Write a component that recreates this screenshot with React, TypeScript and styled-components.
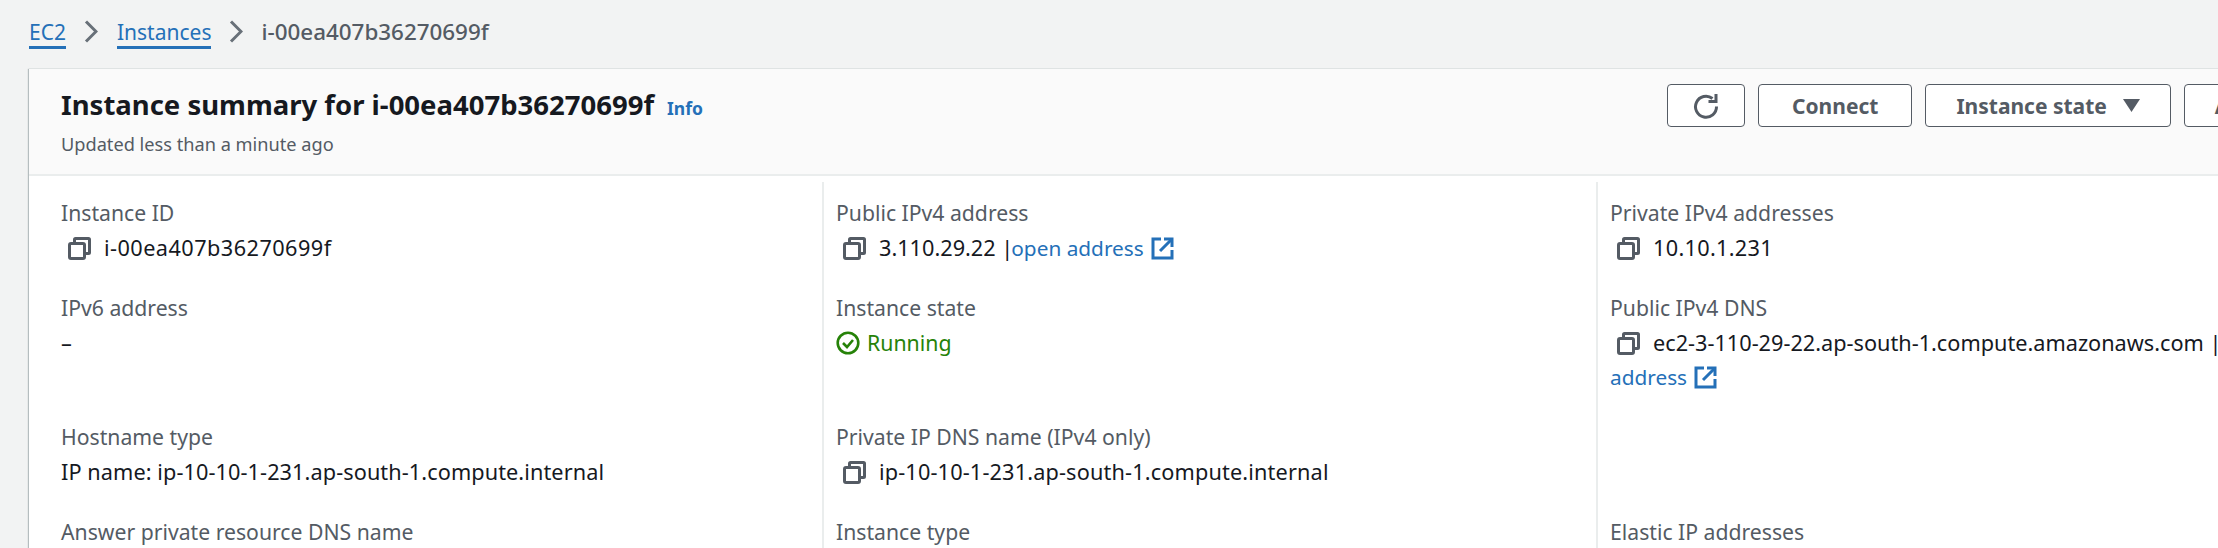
import React from 'react';
import styled, { createGlobalStyle } from 'styled-components';

const Global = createGlobalStyle`
  html, body { margin: 0; padding: 0; background: #f2f3f3; overflow: hidden; }
  body { font-family: "Noto Sans", "Open Sans", sans-serif; color: #16191f; }
`;

const Page = styled.div`
  width: 2218px;
  height: 548px;
  overflow: hidden;
  padding: 0 0 0 29px;
  box-sizing: border-box;
`;

const Breadcrumbs = styled.nav`
  display: flex;
  align-items: center;
  height: 69px;
  padding-bottom: 6px;
  box-sizing: border-box;
`;

const Crumb = styled.a`
  color: #2470b8;
  border-bottom: 3px solid #2470b8;
  font-size: 21px;
  line-height: 28px;
  margin-top: 3px;
`;

const Current = styled.span`
  color: #545b64;
  font-size: 22.400px;
  font-weight: 500;
  margin-left: -1px;
`;

const Sep = styled.svg`
  width: 14px;
  height: 23px;
  margin: 0 19px 0 18px;
  fill: none;
  stroke: #687078;
  stroke-width: 3;
`;

const Card = styled.section`
  width: 2400px;
  background: #fff;
  box-shadow: -1px 0 1px rgba(0, 28, 36, 0.25), 0 -1px 0 #eaeded;
  height: 479px;
`;

const Header = styled.header`
  display: flex;
  align-items: flex-start;
  background: #fafafa;
  border-bottom: 2px solid #eaeded;
  height: 107px;
  box-sizing: border-box;
  padding: 15px 0 0 32px;
`;

const Titles = styled.div`
  flex: 0 0 1606px;
  display: flex;
  flex-direction: column;
  margin-top: 3px;
`;

const TitleRow = styled.div`
  display: flex;
  align-items: baseline;
  gap: 13px;
`;

const Title = styled.h2`
  margin: 0;
  font-size: 27.500px;
  font-weight: 700;
  line-height: 36px;
`;

const Info = styled.a`
  color: #2470b8;
  font-size: 17.500px;
  font-weight: 700;
`;

const Updated = styled.div`
  font-size: 18.200px;
  line-height: 26px;
  color: #545b64;
  margin-top: 8px;
`;

const Actions = styled.div`
  display: flex;
  gap: 13px;
`;

const Button = styled.button<{ $pad?: number }>`
  height: 43px;
  box-sizing: border-box;
  padding: 0 ${(p) => p.$pad ?? 30}px;
  display: flex;
  align-items: center;
  gap: 16px;
  background: #fff;
  border: 1px solid #545b64;
  border-radius: 4px;
  color: #545b64;
  font-family: inherit;
  font-size: 21px;
  font-weight: 700;
  white-space: nowrap;
`;

const IconButton = styled(Button)`
  width: 78px;
  padding: 0;
  justify-content: center;
`;

const Body = styled.div`
  display: grid;
  grid-template-columns: 793px 774px 774px;
  padding-top: 6px;
`;

const Cell = styled.div<{ $first?: boolean }>`
  padding: 13px 14px 12px ${(p) => (p.$first ? '32px' : '12px')};
  border-left: ${(p) => (p.$first ? '0' : '2px solid #eaeded')};
  min-height: 70px;
`;

const Label = styled.div`
  color: #545b64;
  font-size: 21.200px;
  line-height: 36px;
`;

const Value = styled.div<{ $track?: number }>`
  color: #16191f;
  font-size: 21.700px;
  line-height: 34px;
  letter-spacing: ${(p) => p.$track ?? 0}px;
`;

const CopyIcon = styled.svg`
  width: 23px;
  height: 23px;
  margin: 0 13px 0 7px;
  vertical-align: -4px;
  fill: none;
  stroke: #545b64;
  stroke-width: 3;
`;

const Link = styled.a`
  color: #2470b8;
  font-size: 20.800px;
  margin-left: -2px;
`;

const Ext = styled.svg`
  width: 23px;
  height: 23px;
  margin-left: 7px;
  vertical-align: -4px;
  fill: none;
  stroke: #2470b8;
  stroke-width: 3;
`;

const Running = styled.div`
  display: flex;
  align-items: center;
  gap: 7px;
  color: #268208;
  font-size: 21.300px;
  line-height: 34px;
`;

const Copy = () => (
  <CopyIcon viewBox="0 0 23 23">
    <rect x="1.500" y="6.500" width="15" height="15" rx="1.500" />
    <path d="M6.500 6V2.500a1 1 0 0 1 1-1h13a1 1 0 0 1 1 1v13a1 1 0 0 1-1 1H17" />
  </CopyIcon>
);

const External = () => (
  <Ext viewBox="0 0 23 23">
    <path d="M10 2H2v19h19v-8" />
    <path d="M13 2h8v8" />
    <path d="M21 2 9 14" />
  </Ext>
);

const Chevron = () => (
  <Sep viewBox="0 0 14 23">
    <path d="M2 1.500l10 10-10 10" />
  </Sep>
);

export default function App() {
  return (
    <Page>
      <Global />
      <Breadcrumbs>
        <Crumb>EC2</Crumb>
        <Chevron />
        <Crumb>Instances</Crumb>
        <Chevron />
        <Current>i-00ea407b36270699f</Current>
      </Breadcrumbs>
      <Card>
        <Header>
          <Titles>
            <TitleRow>
              <Title>Instance summary for i-00ea407b36270699f</Title>
              <Info>Info</Info>
            </TitleRow>
            <Updated>Updated less than a minute ago</Updated>
          </Titles>
          <Actions>
            <IconButton>
              <svg width="26" height="26" viewBox="0 0 26 26" fill="none" stroke="#545b64" strokeWidth="3">
                <path d="M19.500 5.500A10.500 10.500 0 1 0 23.500 13.500" />
                <path d="M23 1v7.500h-7.500" />
              </svg>
            </IconButton>
            <Button $pad={33}>Connect</Button>
            <Button>
              Instance state
              <svg width="17" height="13" viewBox="0 0 17 13" fill="#545b64">
                <path d="M0 0h17l-8.500 13z" />
              </svg>
            </Button>
            <Button>Actions</Button>
          </Actions>
        </Header>
        <Body>
          <Cell $first>
            <Label>Instance ID</Label>
            <Value $track={0.45}><Copy />i-00ea407b36270699f</Value>
          </Cell>
          <Cell>
            <Label>Public IPv4 address</Label>
            <Value><Copy />3.110.29.22 |<Link>open address<External /></Link></Value>
          </Cell>
          <Cell>
            <Label>Private IPv4 addresses</Label>
            <Value $track={0.3}><Copy />10.10.1.231</Value>
          </Cell>
          <Cell $first>
            <Label>IPv6 address</Label>
            <Value>–</Value>
          </Cell>
          <Cell>
            <Label>Instance state</Label>
            <Running>
              <svg width="24" height="24" viewBox="0 0 24 24" fill="none" stroke="#268208" strokeWidth="2.600">
                <circle cx="12" cy="12" r="10.300" />
                <path d="M7 12l4 4 6-7" />
              </svg>
              Running
            </Running>
          </Cell>
          <Cell>
            <Label>Public IPv4 DNS</Label>
            <Value><Copy />ec2-3-110-29-22.ap-south-1.compute.amazonaws.com | <Link>open address<External /></Link></Value>
          </Cell>
          <Cell $first>
            <Label>Hostname type</Label>
            <Value $track={0.08}>IP name: ip-10-10-1-231.ap-south-1.compute.internal</Value>
          </Cell>
          <Cell>
            <Label>Private IP DNS name (IPv4 only)</Label>
            <Value $track={0.15}><Copy />ip-10-10-1-231.ap-south-1.compute.internal</Value>
          </Cell>
          <Cell />
          <Cell $first>
            <Label>Answer private resource DNS name</Label>
          </Cell>
          <Cell>
            <Label>Instance type</Label>
          </Cell>
          <Cell>
            <Label>Elastic IP addresses</Label>
          </Cell>
        </Body>
      </Card>
    </Page>
  );
}
